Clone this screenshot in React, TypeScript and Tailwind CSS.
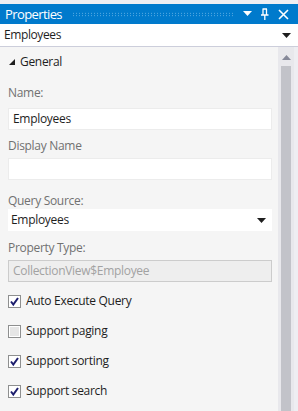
import React from "react";

const FONT = { fontFamily: '"Open Sans", "Noto Sans", sans-serif' };

function Check({ checked, label }: { checked: boolean; label: string }) {
    return (
        <div className="flex items-center h-[16px]">
            <div className="w-[13px] h-[13px] border border-[#8e8f8f] bg-white flex items-center justify-center">
                {checked && (
                    <svg width="11" height="11" viewBox="0 0 11 11">
                        <path d="M2 5.5 L4.3 8.5 L9 2" fill="none" stroke="#1d1e6e" strokeWidth="2" />
                    </svg>
                )}
                {!checked && <div className="w-[9px] h-[9px] bg-[#e6e6e6]" />}
            </div>
            <span className="ml-[5px] text-[12px] tracking-[-0.3px] text-[#1e1e1e]">{label}</span>
        </div>
    );
}

export default function App() {
    return (
        <div className="w-[298px] h-[411px] bg-[#eeeef2] overflow-hidden flex flex-col" style={FONT}>
            <div className="h-[4px]" />

            {/* Title bar */}
            <div className="h-[20px] bg-[#007acc] flex items-center pl-[5px] pr-[9px]">
                <span className="text-white text-[13px] tracking-[-0.6px] leading-none">Properties</span>
                <div className="flex-1 ml-[10px] mr-[8px] h-[5px] bg-[radial-gradient(#6ab4e6_0.7px,transparent_0.9px)] bg-[length:3px_2.5px]" />
                <svg width="9" height="6" viewBox="0 0 9 6" className="mr-[8px]">
                    <path d="M0 0 H9 L4.5 5 Z" fill="white" />
                </svg>
                <svg width="9" height="12" viewBox="0 0 9 12" className="mr-[9px]">
                    <path d="M2.5 1 H7 M3 1 V7 M6.5 1 V7 M1 7 H8.5 M4.8 7 V12" fill="none" stroke="white" strokeWidth="1.3" />
                </svg>
                <svg width="11" height="11" viewBox="0 0 11 11">
                    <path d="M1 1 L10 10 M10 1 L1 10" stroke="white" strokeWidth="1.6" />
                </svg>
            </div>

            {/* Object selector */}
            <div className="h-[23px] bg-white flex items-center pl-[4px] pr-[7px] border-b border-[#cccedb]">
                <span className="flex-1 text-[12px] tracking-[-0.4px] text-[#1e1e1e]">Employees</span>
                <svg width="9" height="5" viewBox="0 0 9 5">
                    <path d="M0 0 H9 L4.5 5 Z" fill="#1e1e1e" />
                </svg>
            </div>

            <div className="flex flex-1 bg-[#f5f5f5]">
                {/* Content */}
                <div className="flex-1 pl-[8px] pr-[6px] flex flex-col text-[12px] tracking-[-0.3px]">
                    <div className="flex items-center mt-[7px] h-[16px]">
                        <svg width="6" height="6" viewBox="0 0 6 6" className="ml-[1px]">
                            <path d="M6 0 V6 H0 Z" fill="#1e1e1e" />
                        </svg>
                        <span className="ml-[5px] text-[#1e1e1e]">General</span>
                    </div>

                    <span className="mt-[15px] text-[#717171] leading-[16px]">Name:</span>
                    <div className="mt-[7px] h-[22px] bg-white border border-[#ececec] flex items-center px-[4px] text-[#1e1e1e]">Employees</div>

                    <span className="mt-[8px] text-[#717171] leading-[16px]">Display Name</span>
                    <div className="mt-[4px] h-[22px] bg-white border border-[#ececec]" />

                    <span className="mt-[13px] text-[#717171] leading-[16px]">Query Source:</span>
                    <div className="mt-[0px] h-[22px] bg-white flex items-center pl-[3px] pr-[6px]">
                        <span className="flex-1 text-[#1e1e1e]">Employees</span>
                        <svg width="9" height="5" viewBox="0 0 9 5">
                            <path d="M0 0 H9 L4.5 5 Z" fill="#1e1e1e" />
                        </svg>
                    </div>

                    <span className="mt-[9px] text-[#717171] leading-[16px]">Property Type:</span>
                    <div className="mt-[4px] h-[22px] bg-[#eeeeee] border border-[#cccccc] flex items-center px-[4px] text-[#a2a2a2]">CollectionView$Employee</div>

                    <div className="mt-[11px] flex flex-col gap-[14px]">
                        <Check checked label="Auto Execute Query" />
                        <Check checked={false} label="Support paging" />
                        <Check checked label="Support sorting" />
                        <Check checked label="Support search" />
                    </div>
                </div>

                {/* Scrollbar */}
                <div className="w-[16px] bg-[#e8e8ec] flex flex-col items-center">
                    <svg width="9" height="5" viewBox="0 0 9 5" className="mt-[8px]">
                        <path d="M0 5 H9 L4.5 0 Z" fill="#868999" />
                    </svg>
                    <div className="mt-[6px] w-[10px] flex-1 bg-[#c2c3c9]" />
                </div>
                <div className="w-[4px] bg-[#eeeef2]" />
            </div>
        </div>
    );
}
